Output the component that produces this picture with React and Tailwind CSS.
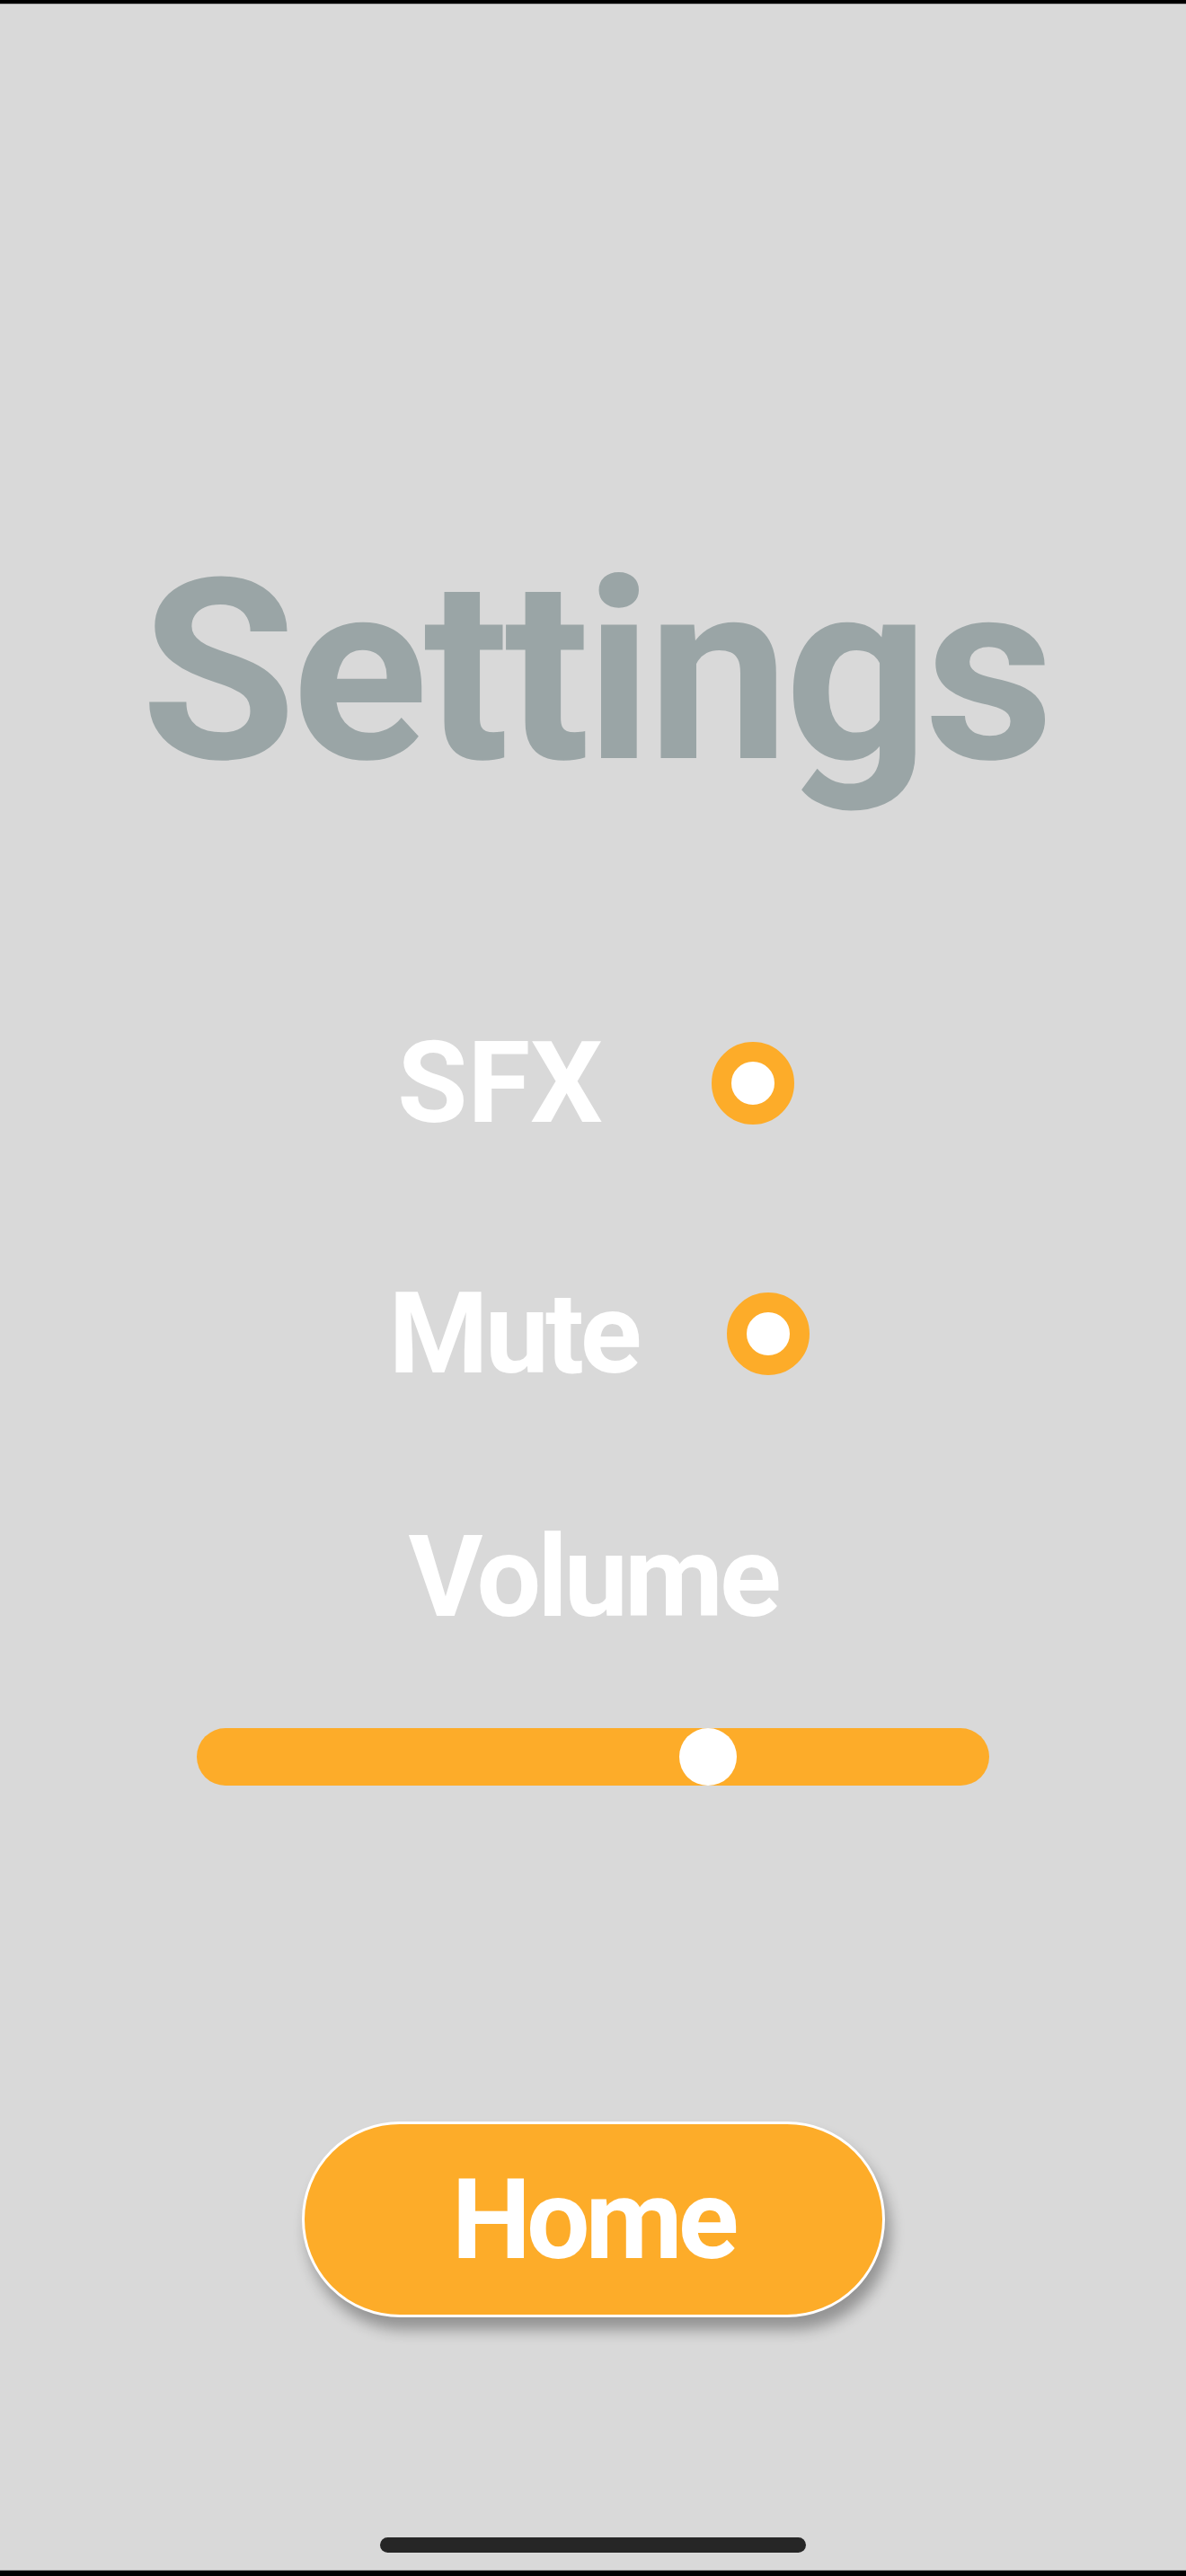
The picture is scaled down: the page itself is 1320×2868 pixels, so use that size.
import React from "react";

const font = { fontFamily: "Roboto, 'Open Sans', sans-serif" };

function Radio() {
  return (
    <div className="w-[92px] h-[92px] rounded-full border-[22px] border-[#fdac29] bg-white shrink-0" />
  );
}

export default function App() {
  return (
    <div
      className="w-[1320px] h-[2868px] bg-[#d9d9d9] flex flex-col items-center overflow-hidden"
      style={font}
    >
      <div className="w-full h-[4px] bg-black shrink-0" />
      <div className="w-full h-[1px] bg-[#a9a9a9] shrink-0" />

      <h1 className="mt-[603px] pl-[5px] text-[281px] leading-none font-bold text-[#9aa5a6] tracking-[-5px]">
        Settings
      </h1>

      <div className="mt-[253px] flex items-center gap-[121px] pl-[6px]">
        <span className="text-[127px] leading-none font-bold text-white tracking-[0px]">SFX</span>
        <Radio />
      </div>

      <div className="mt-[152px] flex items-center gap-[99px] pl-[14px]">
        <span className="text-[127px] leading-none font-bold text-white tracking-[-4px]">Mute</span>
        <Radio />
      </div>

      <div className="mt-[144px] text-[127px] leading-none font-bold text-white tracking-[-4px]">
        Volume
      </div>

      <div className="mt-[105px] relative w-[882px] h-[64px] rounded-full bg-[#fdac29]">
        <div className="absolute left-[537px] top-0 w-[64px] h-[64px] rounded-full bg-white" />
      </div>

      <button className="mt-[374px] w-[649px] h-[218px] rounded-full bg-[#fdac29] border-[3px] border-white shadow-[6px_14px_16px_rgba(0,0,0,0.32)] flex items-center justify-center">
        <span className="text-[125px] leading-none font-bold text-white tracking-[-5px]">Home</span>
      </button>

      <div className="flex-1" />
      <div className="mb-[19px] w-[474px] h-[17px] rounded-full bg-[#262626]" />
      <div className="w-full h-[1px] bg-[#a9a9a9] shrink-0" />
      <div className="w-full h-[6px] bg-black shrink-0" />
    </div>
  );
}
